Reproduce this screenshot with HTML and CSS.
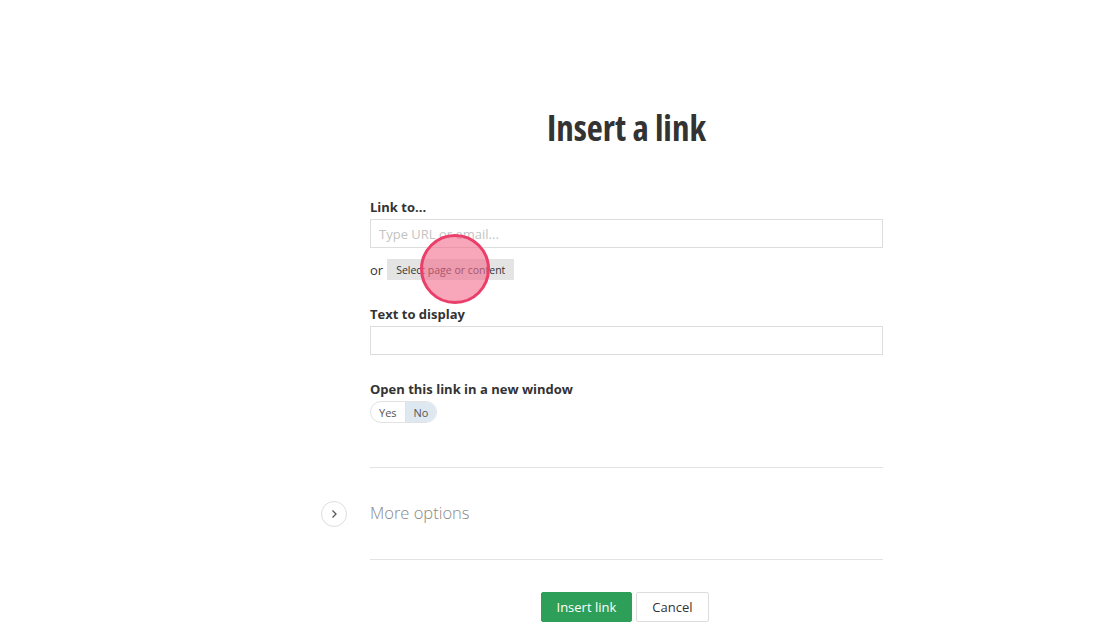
FILE: index.html
```html
<!DOCTYPE html>
<html lang="en">
<head>
    <meta charset="UTF-8">
    <title>Insert a link</title>
    <link rel="stylesheet" href="styles.css">
</head>
<body>
    <div class="page">
        <h1 class="title">Insert a link</h1>

        <form class="link-form">
            <div class="field">
                <label for="linkTo">Link to...</label>
                <input id="linkTo" type="text" placeholder="Type URL or email...">
                <div class="or-row">
                    <span>or</span>
                    <button type="button" class="select-btn">Select page or content</button>
                    <span class="click-marker"></span>
                </div>
            </div>

            <div class="field">
                <label for="linkText">Text to display</label>
                <input id="linkText" type="text">
            </div>

            <div class="field">
                <label>Open this link in a new window</label>
                <div class="toggle">
                    <span class="toggle-opt">Yes</span>
                    <span class="toggle-opt active">No</span>
                </div>
            </div>

            <div class="more-options">
                <span class="more-icon">
                    <svg width="10" height="10" viewBox="0 0 10 10"><path d="M3.5 1.5 L7 5 L3.5 8.5" fill="none" stroke="#555" stroke-width="1.3"/></svg>
                </span>
                <span class="more-text">More options</span>
            </div>

            <div class="actions">
                <button type="button" class="btn-primary">Insert link</button>
                <button type="button" class="btn-default">Cancel</button>
            </div>
        </form>
    </div>
</body>
</html>
```

FILE: styles.css
```css
body {
    margin: 0;
    background: #fff;
    font-family: 'Open Sans', 'Noto Sans', sans-serif;
    color: #333;
}

.page {
    width: 513px;
    margin: 0 0 0 370px;
    padding-top: 103px;
}

.title {
    margin: 0 0 45px;
    text-align: center;
    font-size: 35px;
    font-weight: 700;
    font-stretch: condensed;
    line-height: 50px;
    color: #333;
}

.field {
    display: flex;
    flex-direction: column;
    margin-bottom: 25px;
}

.field label {
    font-size: 13px;
    font-weight: 700;
    line-height: 18px;
    margin-bottom: 3px;
    color: #333;
}

.field input {
    height: 29px;
    box-sizing: border-box;
    border: 1px solid #ddd;
    padding: 0 8px;
    font-family: inherit;
    font-size: 13px;
    color: #333;
}

.field input::placeholder {
    color: #c4c4c4;
}

.or-row {
    position: relative;
    display: flex;
    align-items: center;
    gap: 4px;
    margin-top: 11px;
    font-size: 13px;
}

.select-btn {
    background: #e4e4e4;
    border: none;
    height: 21px;
    padding: 0 9px;
    font-family: inherit;
    font-size: 10.5px;
    color: #333;
}

.click-marker {
    position: absolute;
    left: 50px;
    top: -25px;
    width: 70px;
    height: 70px;
    box-sizing: border-box;
    border-radius: 50%;
    border: 3px solid #ea3f6a;
    background: rgba(244, 107, 140, 0.6);
}

.toggle {
    display: flex;
    align-self: flex-start;
    height: 22px;
    box-sizing: border-box;
    border: 1px solid #e2e2e2;
    border-radius: 11px;
    overflow: hidden;
    font-size: 11px;
}

.toggle-opt {
    display: flex;
    align-items: center;
    padding: 0 8px;
    color: #555;
}

.toggle-opt + .toggle-opt {
    border-left: 1px solid #e2e2e2;
}

.toggle-opt.active {
    background: #dde8f1;
}

.more-options {
    display: flex;
    align-items: center;
    margin-top: 44px;
    height: 91px;
    border-top: 1px solid #e3e3e3;
    border-bottom: 1px solid #e3e3e3;
}

.more-icon {
    display: flex;
    align-items: center;
    justify-content: center;
    width: 26px;
    height: 26px;
    box-sizing: border-box;
    border: 1px solid #ddd;
    border-radius: 50%;
    margin-left: -49px;
    margin-right: 23px;
}

.more-text {
    font-size: 16.5px;
    font-weight: 300;
    color: #888;
    margin-top: -2px;
}

.actions {
    display: flex;
    justify-content: center;
    gap: 4px;
    margin-top: 32px;
    padding-right: 4px;
}

.actions button {
    height: 30px;
    font-family: inherit;
    font-size: 13px;
    border-radius: 2px;
}

.btn-primary {
    background: #2e9f58;
    border: 1px solid #2e9f58;
    color: #fff;
    padding: 0 15px;
}

.btn-default {
    background: #fff;
    border: 1px solid #ddd;
    color: #333;
    padding: 0 15px;
}
```
